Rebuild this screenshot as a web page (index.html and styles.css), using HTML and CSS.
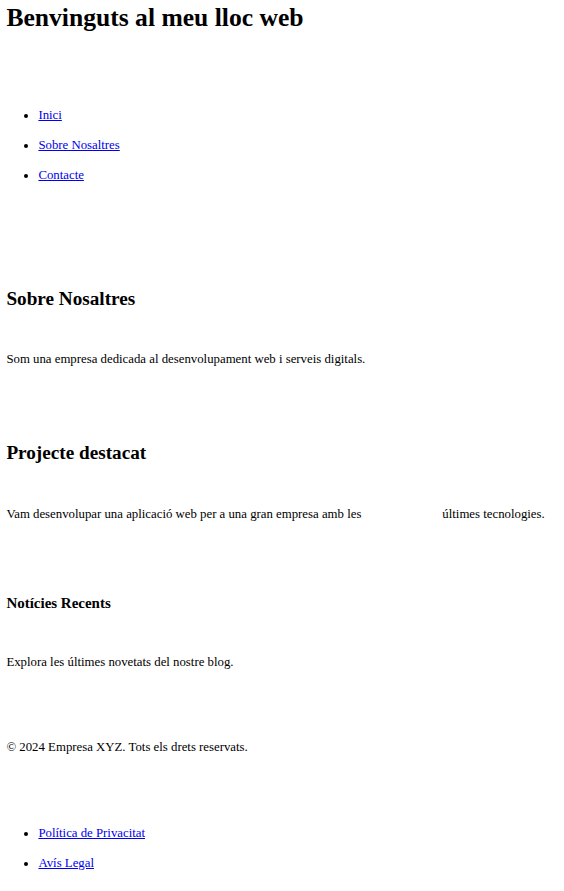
FILE: index.html
```html
<!DOCTYPE html>
<html lang="ca">
<head>
<meta charset="utf-8">
<title>Benvinguts</title>
<link rel="stylesheet" href="styles.css">
</head>
<body>
<header class="site-header">
  <h1 class="title">Benvinguts al meu lloc web</h1>
  <nav>
    <ul class="menu">
      <li><a href="#">Inici</a></li>
      <li><a href="#">Sobre Nosaltres</a></li>
      <li><a href="#">Contacte</a></li>
    </ul>
  </nav>
</header>
<main>
  <section class="about">
    <h2 class="sec-title">Sobre Nosaltres</h2>
    <p class="sec-text">Som una empresa dedicada al desenvolupament web i serveis digitals.</p>
  </section>
  <section class="project">
    <h2 class="sec-title">Projecte destacat</h2>
    <p class="sec-text">Vam desenvolupar una aplicació web per a una gran empresa amb les <span class="blank"></span> últimes tecnologies.</p>
  </section>
  <aside class="news">
    <h3 class="news-title">Notícies Recents</h3>
    <p class="sec-text">Explora les últimes novetats del nostre blog.</p>
  </aside>
</main>
<footer class="site-footer">
  <p class="copy">© 2024 Empresa XYZ. Tots els drets reservats.</p>
  <ul class="menu footer-menu">
    <li><a href="#">Política de Privacitat</a></li>
    <li><a href="#">Avís Legal</a></li>
  </ul>
</footer>
</body>
</html>
```
FILE: styles.css
```css
html, body {
  background: #fff;
}
body {
  margin: 0;
  padding: 3.4px 6.4px 0;
  font-family: "Liberation Serif", "Times New Roman", serif;
  font-size: 12.8px;
  color: #000;
}
a {
  color: #0000ee;
  text-decoration: underline;
}
.title {
  font-size: 25.6px;
  font-weight: bold;
  margin: 0 0 74.5px;
}
.menu {
  margin: 0;
  padding-left: 32px;
  list-style: disc;
}
.menu li + li {
  margin-top: 15.3px;
}
.footer-menu li + li {
  margin-top: 14.8px;
}
.about {
  margin-top: 104.5px;
}
.sec-title {
  font-size: 19.2px;
  font-weight: bold;
  margin: 0 0 42.4px;
}
.sec-text {
  margin: 0;
}
.project {
  margin-top: 74.7px;
}
.project .sec-title {
  margin-bottom: 42.6px;
}
.news {
  margin-top: 73.6px;
}
.news-title {
  font-size: 14.98px;
  font-weight: bold;
  margin: 0 0 42.6px;
}
.blank {
  display: inline-block;
  width: 74.6px;
}
.site-footer {
  margin-top: 70.3px;
}
.copy {
  margin: 0 0 71px;
}
```
